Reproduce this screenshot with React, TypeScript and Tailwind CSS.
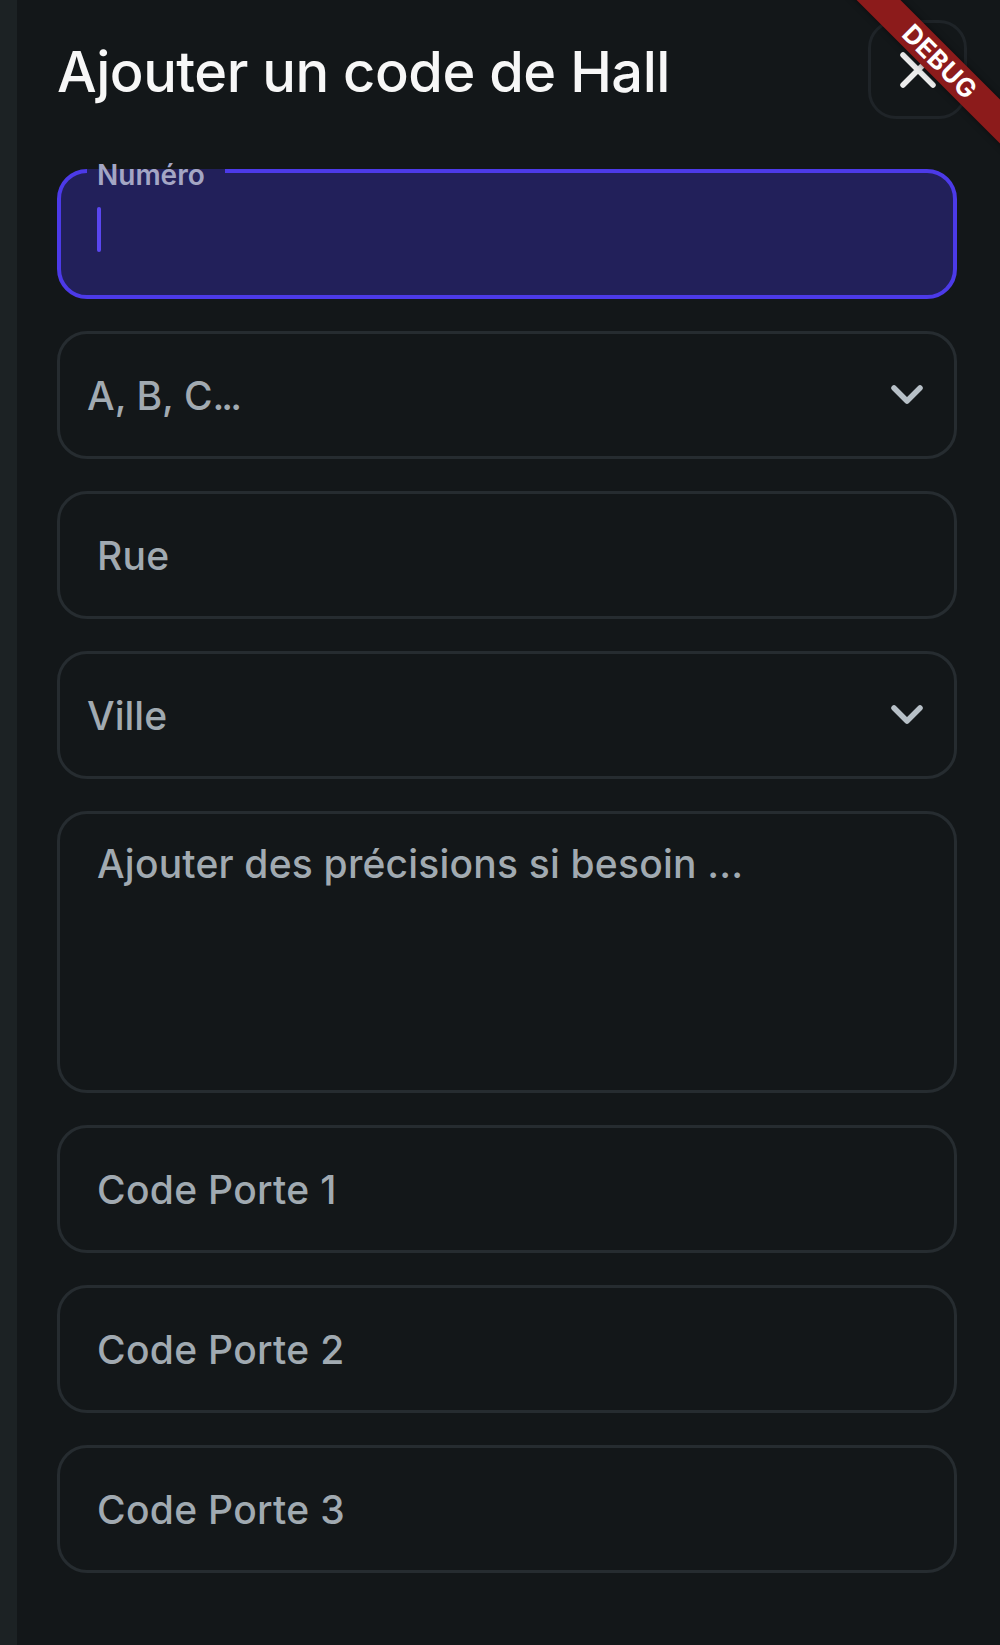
import React from "react";

const font = { fontFamily: "Inter, 'Noto Sans', sans-serif" };

function Chevron() {
  return (
    <svg width="36" height="24" viewBox="0 0 36 24" fill="none" className="shrink-0">
      <path d="M5 5 L18 18 L31 5" stroke="#b7c0c7" strokeWidth="5.5" strokeLinecap="round" strokeLinejoin="round" />
    </svg>
  );
}

function TextField({ placeholder }: { placeholder: string }) {
  return (
    <div className="h-[128px] rounded-[30px] border-[3px] border-[#262c30] flex items-center pl-[37px]">
      <span className="text-[39px] font-medium text-[#a1aab1] leading-none tracking-[0.3px]">{placeholder}</span>
    </div>
  );
}

function SelectField({ children }: { children: React.ReactNode }) {
  return (
    <div className="h-[128px] rounded-[30px] border-[3px] border-[#262c30] flex items-center justify-between pl-[27px] pr-[29px]">
      <span className="text-[39px] font-medium text-[#a1aab1] leading-none">{children}</span>
      <Chevron />
    </div>
  );
}

export default function App() {
  return (
    <div className="relative w-[1000px] h-[1645px] overflow-hidden bg-[#131719] flex" style={font}>
      <div className="w-[17px] h-full bg-[#1c2224] shrink-0" />
      <div className="flex-1 pt-[20px] pl-[40px] pr-[33px]">
        <div className="flex items-center justify-between h-[99px]">
          <h1 className="ml-[0px] mt-[4px] text-[56px] font-medium text-[#f7f7f7] leading-none tracking-[-0.5px]">
            Ajouter un code de Hall
          </h1>
          <button className="w-[99px] h-[99px] rounded-[28px] border-[3px] border-[#1f2428] flex items-center justify-center">
            <svg width="38" height="38" viewBox="0 0 38 38" fill="none">
              <path d="M4 4 L34 34 M34 4 L4 34" stroke="#ececec" strokeWidth="5.5" strokeLinecap="round" />
            </svg>
          </button>
        </div>

        <div className="mt-[50px] pr-[10px] flex flex-col gap-[32px]">
          <div className="relative h-[130px] rounded-[30px] border-[4px] border-[#4c3ae8] bg-[#22205a] flex items-center pl-[36px]">
            <div className="absolute -top-[4px] left-[26px] w-[138px] h-[4px] bg-[#22205a]" />
            <span className="absolute -top-[12px] left-[36px] text-[28px] font-semibold text-[#a4a6c4] leading-none">
              Numéro
            </span>
            <div className="w-[4px] h-[45px] rounded-full bg-[#5a46f0] mb-[10px]" />
          </div>

          <SelectField>
            A, B, C<span className="tracking-[-3px]">...</span>
          </SelectField>
          <TextField placeholder="Rue" />
          <SelectField>Ville</SelectField>

          <div className="h-[282px] rounded-[30px] border-[3px] border-[#262c30] pl-[37px] pt-[30px]">
            <span className="text-[39px] font-medium text-[#a1aab1] leading-none tracking-[0.2px]">
              Ajouter des précisions si besoin ...
            </span>
          </div>

          <TextField placeholder="Code Porte 1" />
          <TextField placeholder="Code Porte 2" />
          <TextField placeholder="Code Porte 3" />
        </div>
      </div>

      <div className="absolute left-[810px] top-[46px] w-[260px] h-[31px] rotate-45 bg-[#8c1b1b] flex items-center justify-center shadow-[0_0_6px_rgba(0,0,0,0.5)]">
        <span className="text-[26px] font-bold text-white leading-none tracking-[0.5px]">DEBUG</span>
      </div>
    </div>
  );
}
